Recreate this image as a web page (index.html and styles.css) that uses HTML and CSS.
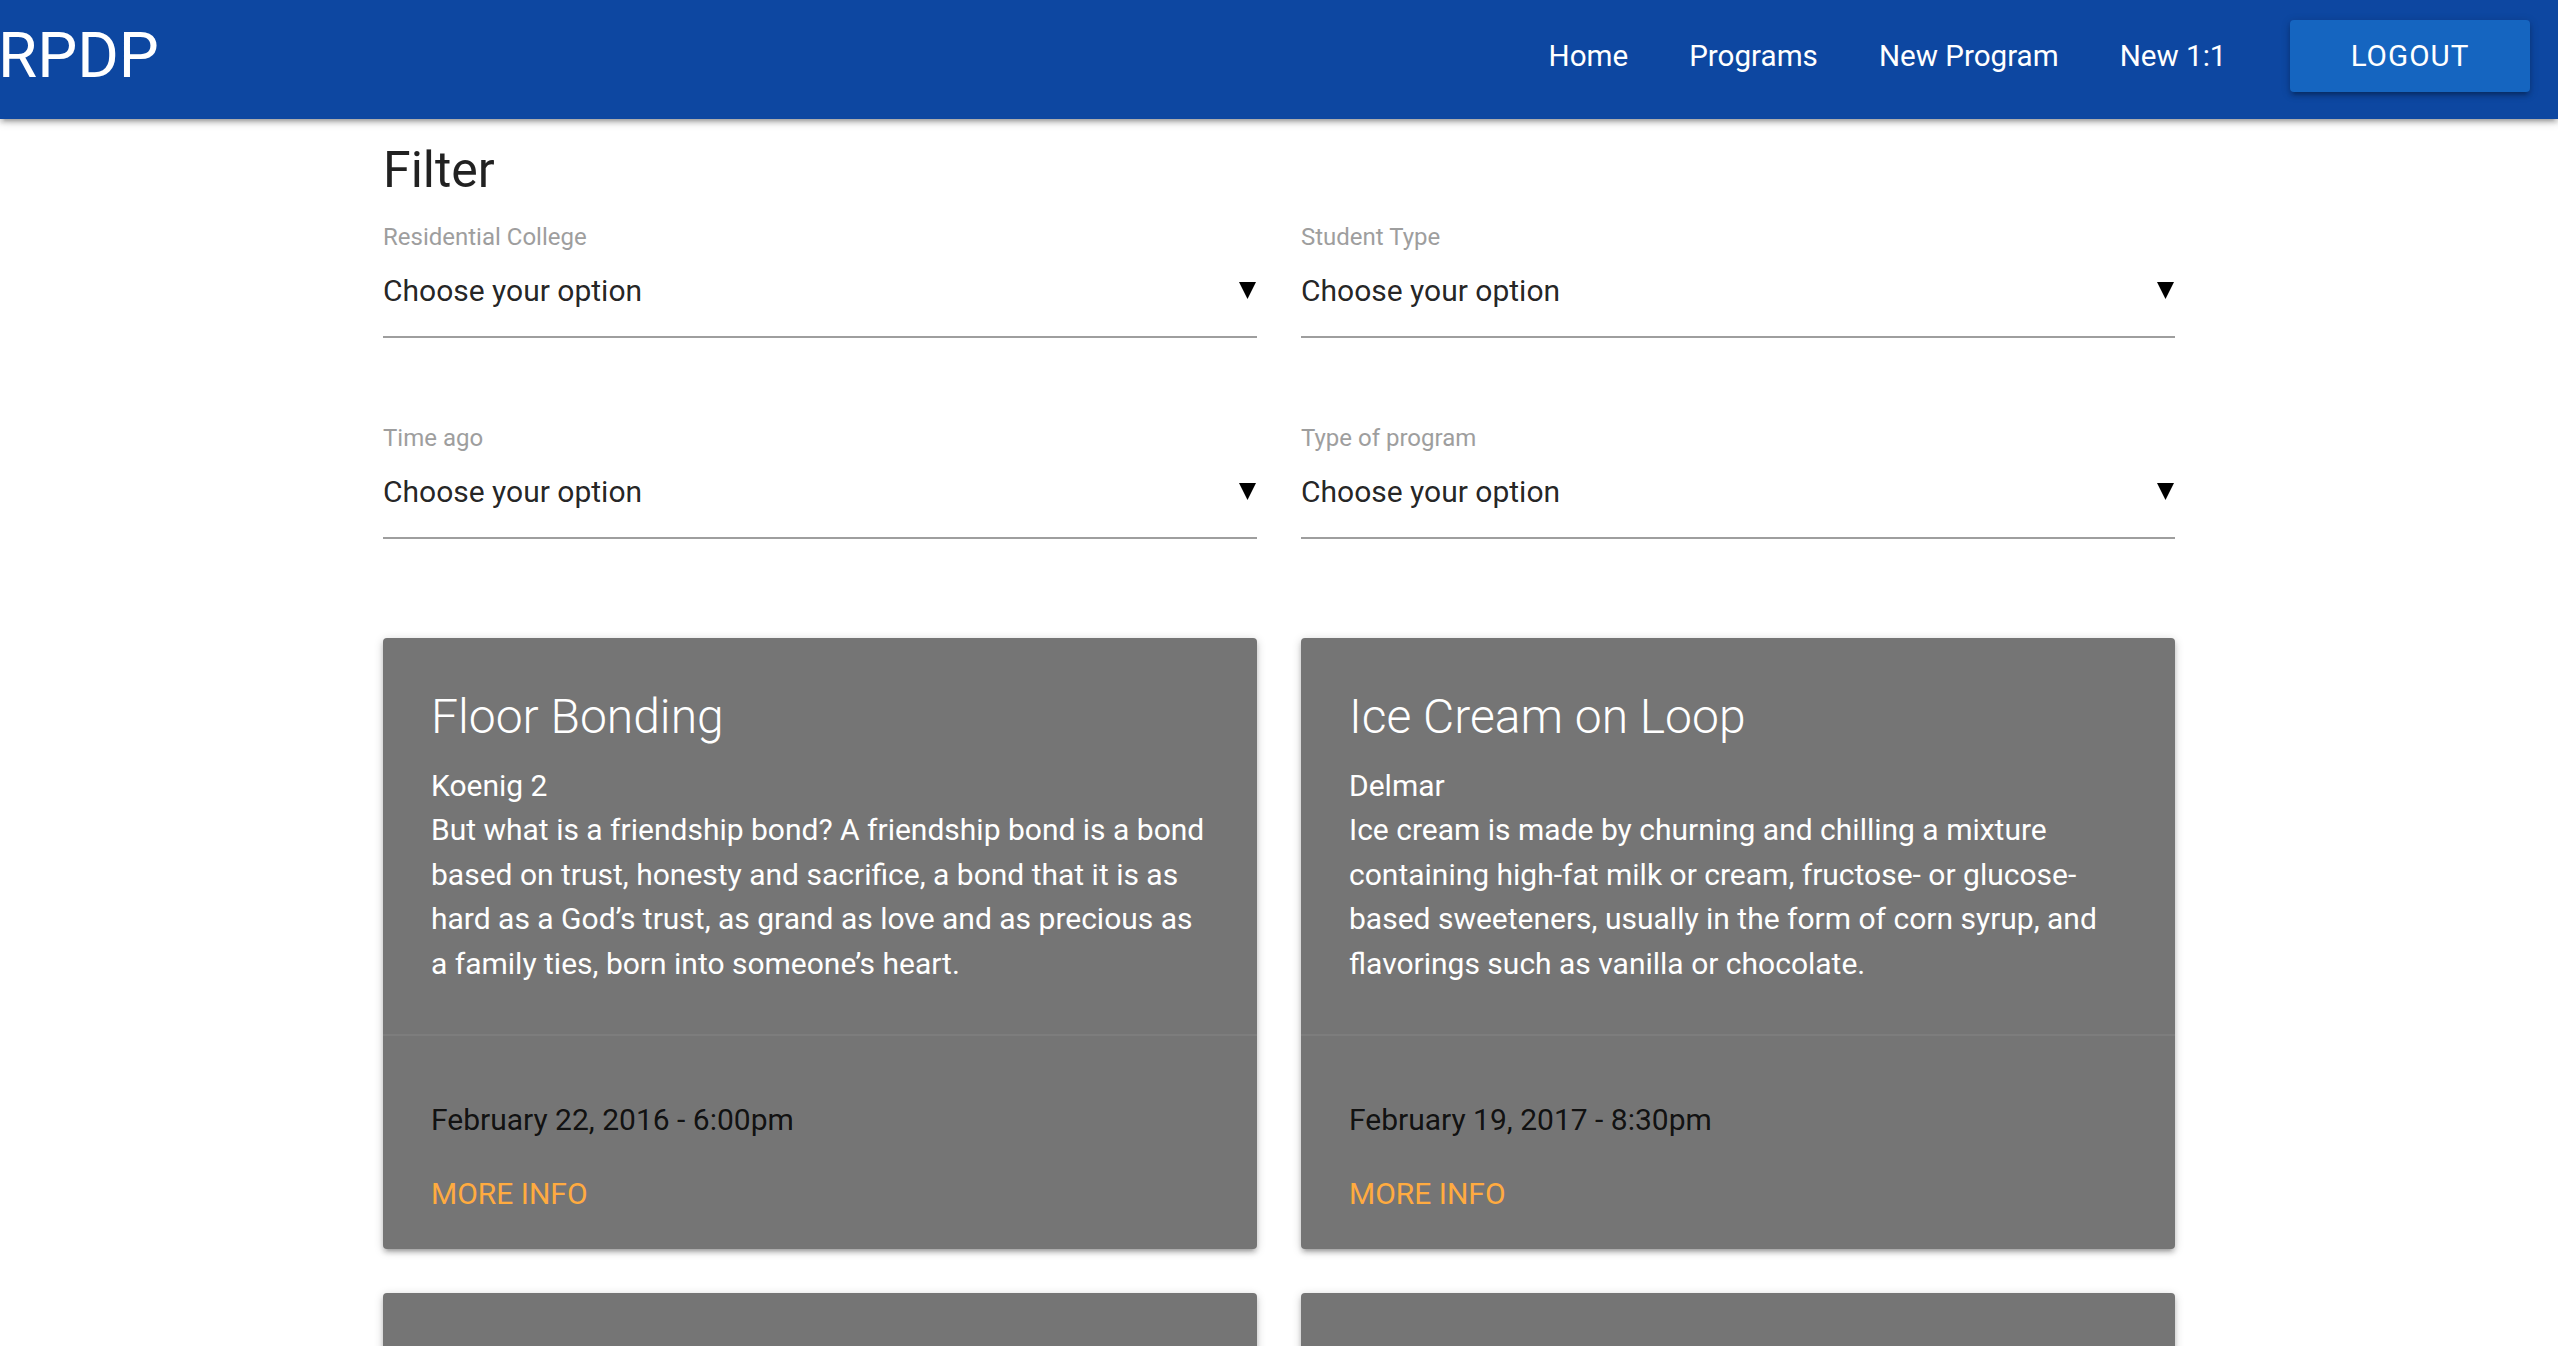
FILE: index.html
```html
<!DOCTYPE html>
<html lang="en">
<head>
<meta charset="utf-8">
<title>RPDP</title>
<link rel="stylesheet" href="styles.css">
</head>
<body>
<header class="navbar">
  <a class="brand" href="#">RPDP</a>
  <nav class="menu">
    <a class="menu-link" href="#">Home</a>
    <a class="menu-link" href="#">Programs</a>
    <a class="menu-link" href="#">New Program</a>
    <a class="menu-link" href="#">New 1:1</a>
    <a class="btn-logout" href="#">Logout</a>
  </nav>
</header>

<main class="container">
  <h2 class="filter-title">Filter</h2>
  <div class="filters">
    <div class="field">
      <label class="field-label">Residential College</label>
      <div class="select"><span class="select-value">Choose your option</span><svg class="caret" width="17" height="17" viewBox="0 0 17 17"><polygon points="0,0 17,0 8.5,17" fill="#000"/></svg></div>
    </div>
    <div class="field">
      <label class="field-label">Student Type</label>
      <div class="select"><span class="select-value">Choose your option</span><svg class="caret" width="17" height="17" viewBox="0 0 17 17"><polygon points="0,0 17,0 8.5,17" fill="#000"/></svg></div>
    </div>
    <div class="field">
      <label class="field-label">Time ago</label>
      <div class="select"><span class="select-value">Choose your option</span><svg class="caret" width="17" height="17" viewBox="0 0 17 17"><polygon points="0,0 17,0 8.5,17" fill="#000"/></svg></div>
    </div>
    <div class="field">
      <label class="field-label">Type of program</label>
      <div class="select"><span class="select-value">Choose your option</span><svg class="caret" width="17" height="17" viewBox="0 0 17 17"><polygon points="0,0 17,0 8.5,17" fill="#000"/></svg></div>
    </div>
  </div>

  <div class="cards">
    <article class="card">
      <div class="card-content">
        <h3 class="card-title">Floor Bonding</h3>
        <p class="card-text">Koenig 2<br>But what is a friendship bond? A friendship bond is a bond based on trust, honesty and sacrifice, a bond that it is as hard as a God’s trust, as grand as love and as precious as a family ties, born into someone’s heart.</p>
      </div>
      <div class="card-action">
        <p class="card-date">February 22, 2016 - 6:00pm</p>
        <a class="card-link" href="#">More info</a>
      </div>
    </article>
    <article class="card">
      <div class="card-content">
        <h3 class="card-title">Ice Cream on Loop</h3>
        <p class="card-text">Delmar<br>Ice cream is made by churning and chilling a mixture containing high-fat milk or cream, fructose- or glucose-based sweeteners, usually in the form of corn syrup, and flavorings such as vanilla or chocolate.</p>
      </div>
      <div class="card-action">
        <p class="card-date">February 19, 2017 - 8:30pm</p>
        <a class="card-link" href="#">More info</a>
      </div>
    </article>
    <article class="card">
      <div class="card-content">
        <h3 class="card-title">&nbsp;</h3>
        <p class="card-text">&nbsp;</p>
      </div>
    </article>
    <article class="card">
      <div class="card-content">
        <h3 class="card-title">&nbsp;</h3>
        <p class="card-text">&nbsp;</p>
      </div>
    </article>
  </div>
</main>
</body>
</html>
```

FILE: styles.css
```css
* { box-sizing: border-box; }

body {
  margin: 0;
  font-family: Roboto, "Liberation Sans", sans-serif;
  background: #fff;
  color: rgba(0, 0, 0, 0.87);
}

.navbar {
  position: relative;
  z-index: 2;
  height: 119px;
  padding-bottom: 7px;
  background: #0d47a1;
  display: flex;
  align-items: center;
  justify-content: space-between;
  box-shadow: 0 4px 4px 0 rgba(0,0,0,0.14), 0 6px 2px -4px rgba(0,0,0,0.12), 0 2px 10px 0 rgba(0,0,0,0.2);
}

.brand {
  margin-left: -2px;
  font-size: 63.5px;
  line-height: 1;
  color: #fff;
  text-decoration: none;
}

.menu {
  display: flex;
  align-items: center;
}

.menu-link {
  padding: 0 30.5px;
  font-size: 29.6px;
  line-height: 44px;
  color: #fff;
  text-decoration: none;
}

.btn-logout {
  margin-left: 33px;
  margin-right: 28px;
  width: 240px;
  height: 72px;
  display: flex;
  align-items: center;
  justify-content: center;
  background: #1565c0;
  border-radius: 4px;
  color: #fff;
  font-size: 29.6px;
  letter-spacing: 1px;
  text-transform: uppercase;
  text-decoration: none;
  box-shadow: 0 4px 4px 0 rgba(0,0,0,0.14), 0 6px 2px -4px rgba(0,0,0,0.12), 0 2px 10px 0 rgba(0,0,0,0.2);
}

.container {
  width: 1792px;
  max-width: 70.1%;
  margin: 0 auto;
}

.filter-title {
  margin: 24px 0 29px;
  font-size: 50px;
  font-weight: 400;
  line-height: 55px;
  color: rgba(0, 0, 0, 0.87);
}

.filters {
  display: grid;
  grid-template-columns: 1fr 1fr;
  column-gap: 44px;
  row-gap: 90px;
}

.field-label {
  display: block;
  font-size: 24px;
  line-height: 20px;
  color: #9e9e9e;
}

.select {
  height: 91px;
  padding-bottom: 3px;
  border-bottom: 2px solid #9e9e9e;
  display: flex;
  align-items: center;
  justify-content: space-between;
  font-size: 30px;
  color: rgba(0, 0, 0, 0.87);
}

.caret {
  display: block;
  margin-right: 1px;
}

.cards {
  display: grid;
  grid-template-columns: 1fr 1fr;
  gap: 44px;
  margin-top: 99px;
  padding-bottom: 44px;
}

.card {
  background: #757575;
  border-radius: 4px;
  display: flex;
  flex-direction: column;
  overflow: hidden;
  box-shadow: 0 4px 4px 0 rgba(0,0,0,0.14), 0 6px 2px -4px rgba(0,0,0,0.12), 0 2px 10px 0 rgba(0,0,0,0.2);
}

.card-content {
  flex: 1;
  padding: 49px 48px 48px;
}

.card-title {
  margin: 0 0 18px;
  font-size: 48px;
  font-weight: 300;
  line-height: 59px;
  color: #fff;
}

.card-text {
  margin: 0;
  font-size: 30px;
  line-height: 44.4px;
  color: #fff;
}

.card-action {
  border-top: 2px solid rgba(160, 160, 160, 0.2);
  padding: 62px 48px 32px;
}

.card-date {
  margin: 0 0 30px;
  font-size: 30px;
  line-height: 44.4px;
  color: rgba(0, 0, 0, 0.87);
}

.card-link {
  display: block;
  font-size: 30px;
  line-height: 44.4px;
  color: #ffab40;
  text-transform: uppercase;
  text-decoration: none;
}
```
